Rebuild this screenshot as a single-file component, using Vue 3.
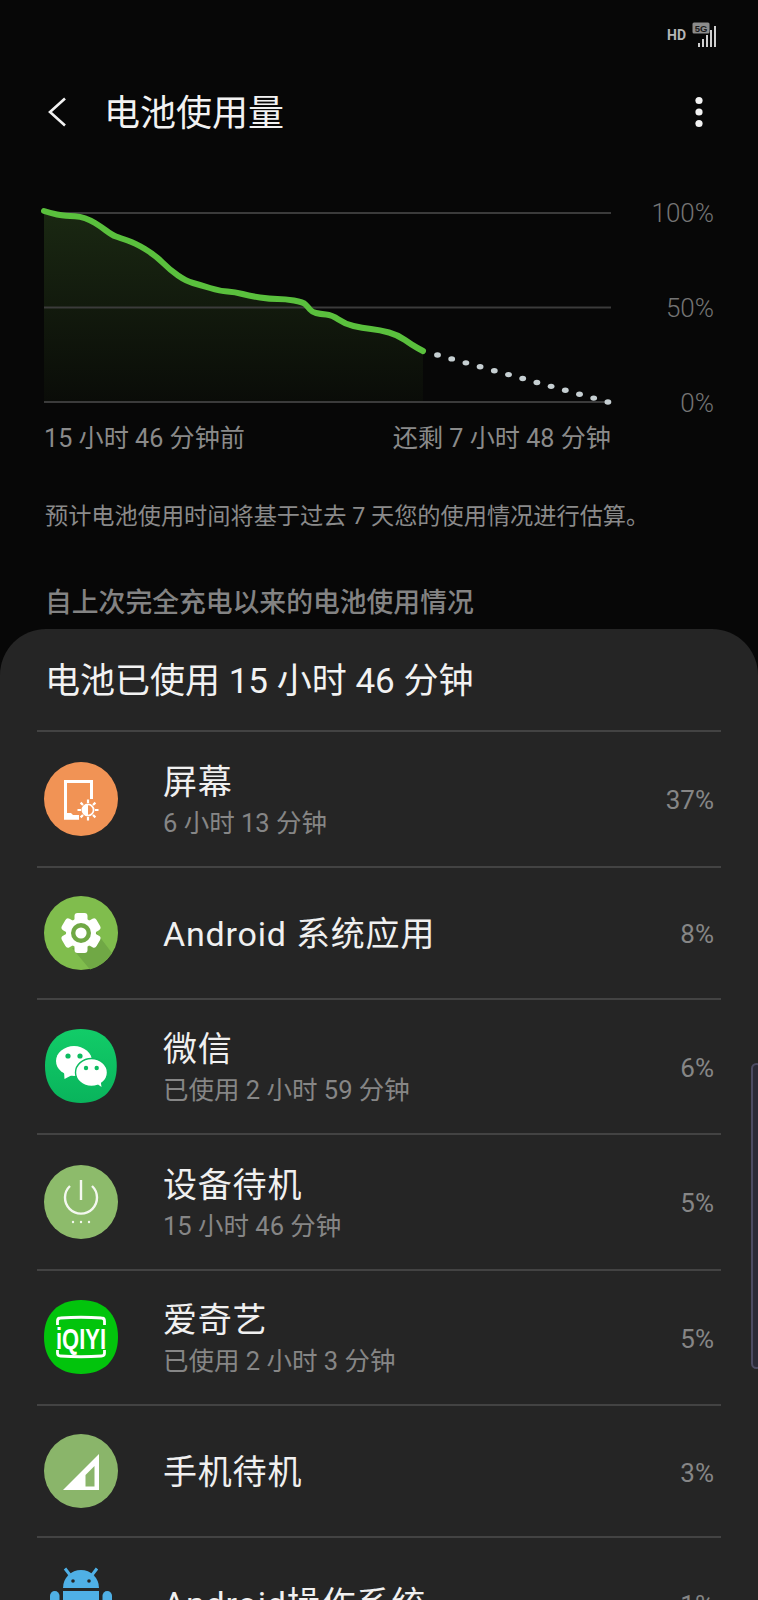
<template>
  <div class="page">
    <!-- status bar -->
    <div class="status">
      <span class="hd">HD</span>
      <svg class="signal" width="26" height="26" viewBox="0 0 26 26">
        <rect x="0.5" y="0.5" width="17" height="11" rx="1.5" fill="#8c8c8c" />
        <text x="9" y="9.6" text-anchor="middle" class="five-g">5G</text>
        <rect x="6" y="21" width="2" height="4" fill="#cfcfcf" />
        <rect x="10" y="17" width="2" height="8" fill="#cfcfcf" />
        <rect x="14" y="13" width="2" height="12" fill="#cfcfcf" />
        <rect x="18" y="8" width="2" height="17" fill="#cfcfcf" />
        <rect x="22" y="4" width="2" height="21" fill="#cfcfcf" />
      </svg>
    </div>

    <!-- app bar -->
    <header class="appbar">
      <svg class="back" width="20" height="30" viewBox="0 0 20 30">
        <path d="M18 1.5 L3 15 L18 28.5" fill="none" stroke="#f2f2f2" stroke-width="2.6" />
      </svg>
      <h1 class="title">电池使用量</h1>
      <svg class="more" width="8" height="32" viewBox="0 0 8 32">
        <circle cx="4" cy="4.5" r="3.6" fill="#f2f2f2" />
        <circle cx="4" cy="16" r="3.6" fill="#f2f2f2" />
        <circle cx="4" cy="27.5" r="3.6" fill="#f2f2f2" />
      </svg>
    </header>

    <!-- chart -->
    <section class="chart">
      <svg width="575" height="205" viewBox="40 205 575 205">
        <defs>
          <linearGradient id="area" x1="0" y1="0" x2="0" y2="1">
            <stop offset="0" stop-color="#1a2812" />
            <stop offset="1" stop-color="#0a0c08" />
          </linearGradient>
        </defs>
        <path :d="areaPath" fill="url(#area)" />
        <line v-for="y in gridLines" :key="y" x1="44" x2="611" :y1="y" :y2="y" stroke="#3b3b3b" stroke-width="2" />
        <path :d="linePath" fill="none" stroke="#5ac03d" stroke-width="6" stroke-linecap="round" stroke-linejoin="round" />
        <ellipse v-for="d in dots" :key="d.x" :cx="d.x" :cy="d.y" rx="3.4" ry="2.7" fill="#c6cfd2" />
      </svg>
      <div class="yaxis">
        <span>100%</span>
        <span>50%</span>
        <span>0%</span>
      </div>
    </section>
    <div class="xaxis">
      <span>15 小时 46 分钟前</span>
      <span>还剩 7 小时 48 分钟</span>
    </div>

    <p class="note">预计电池使用时间将基于过去 7 天您的使用情况进行估算。</p>
    <h2 class="since">自上次完全充电以来的电池使用情况</h2>

    <!-- usage sheet -->
    <section class="sheet">
      <div class="sheet-title">电池已使用 15 小时 46 分钟</div>
      <div v-for="row in rows" :key="row.name" class="row" :class="{ tall: row.sub }">
        <svg class="icon" width="74" height="74" viewBox="0 0 74 74">
          <template v-if="row.icon === 'screen'">
            <circle cx="37" cy="37" r="37" fill="#f19355" />
            <path d="M35 56 H21.5 V19.5 H47.5 V37" fill="none" stroke="#fff" stroke-width="3" />
            <path d="M20 51 H27 L29 53 H35 V57.5 H20 Z" fill="#fff" />
            <circle cx="44" cy="48" r="5.6" fill="none" stroke="#fff" stroke-width="1.8" />
            <path d="M44 42.4 A5.6 5.6 0 0 0 44 53.6 Z" fill="#fff" />
            <path d="M44 37.5 V41 M44 55 V58.5 M33.5 48 H37 M51 48 H54.5 M36.6 40.6 L39 43 M49 53 L51.4 55.4 M36.6 55.4 L39 53 M49 43 L51.4 40.6" stroke="#fff" stroke-width="2.2" />
          </template>

          <template v-else-if="row.icon === 'gear'">
            <circle cx="37" cy="37" r="37" fill="#80bd4d" />
            <path d="M50 50 L28 52 L46 73.5 A37 37 0 0 0 68 57 L52 36 Z" fill="#70a845" />
            <circle cx="37" cy="37" r="15" fill="#fff" />
            <rect v-for="a in gearAngles" :key="a" x="30.5" y="17" width="13" height="12" rx="3" fill="#fff" :transform="`rotate(${a} 37 37)`" />
            <circle cx="37" cy="37" r="10" fill="#70a845" />
            <circle cx="37" cy="37" r="5.6" fill="#fff" />
          </template>

          <template v-else-if="row.icon === 'wechat'">
            <defs>
              <linearGradient id="wx" x1="0" y1="0" x2="0" y2="1">
                <stop offset="0" stop-color="#12cc68" />
                <stop offset="1" stop-color="#09b45c" />
              </linearGradient>
            </defs>
            <path d="M37 0 C60 0 74 14 74 37 C74 60 60 74 37 74 C14 74 0 60 0 37 C0 14 14 0 37 0 Z" fill="url(#wx)" transform="translate(1 0) scale(.97 1)" />
            <ellipse cx="30" cy="32" rx="18" ry="15" fill="#fff" />
            <path d="M20 42 L20.5 50 L30 45 Z" fill="#fff" />
            <circle cx="24" cy="27" r="2.6" fill="#0cbc60" />
            <circle cx="36" cy="27" r="2.6" fill="#0cbc60" />
            <ellipse cx="47.5" cy="43.5" rx="16" ry="14" fill="#fff" stroke="#0cbc60" stroke-width="1.4" />
            <path d="M52 54 L57.5 58 L56.5 51 Z" fill="#fff" />
            <circle cx="42" cy="39" r="2.2" fill="#0cbc60" />
            <circle cx="52.7" cy="39" r="2.2" fill="#0cbc60" />
          </template>

          <template v-else-if="row.icon === 'power'">
            <circle cx="37" cy="37" r="37" fill="#8dbb6b" />
            <path d="M26 21 A16 16 0 1 0 48 21" fill="none" stroke="#f4f8f0" stroke-width="2.4" />
            <path d="M37 15 V35" stroke="#f4f8f0" stroke-width="2.4" />
            <circle cx="29" cy="57" r="1.2" fill="#f4f8f0" />
            <circle cx="37" cy="57" r="1.2" fill="#f4f8f0" />
            <circle cx="45" cy="57" r="1.2" fill="#f4f8f0" />
          </template>

          <template v-else-if="row.icon === 'iqiyi'">
            <path d="M37 0 C60 0 74 14 74 37 C74 60 60 74 37 74 C14 74 0 60 0 37 C0 14 14 0 37 0 Z" fill="#02c40c" />
            <path d="M13.5 25 V21 Q13.5 18 16.5 18 Q37 16.5 57.5 18 Q60.5 18 60.5 21 V25 M13.5 50 V53 Q13.5 56 16.5 56 Q37 57.5 57.5 56 Q60.5 56 60.5 53 V50" fill="none" stroke="#fff" stroke-width="2.8" />
            <text x="37" y="48.5" text-anchor="middle" textLength="50" lengthAdjust="spacingAndGlyphs" class="iq">iQIYI</text>
          </template>

          <template v-else-if="row.icon === 'signal'">
            <circle cx="37" cy="37" r="37" fill="#8ab56a" />
            <path d="M19 56 L55 20 V56 Z" fill="#fff" />
            <path d="M41.5 41 L50.5 32 V52.5 H41.5 Z" fill="#8ab56a" />
          </template>

          <template v-else>
            <g fill="#4fb0e6">
              <path d="M19 22 A18 18 0 0 1 55 22 Z" />
              <path d="M26 9 L21 2.5 M48 9 L53 2.5" stroke="#4fb0e6" stroke-width="3" />
              <rect x="19" y="25" width="36" height="44" />
              <rect x="6" y="25" width="9.5" height="32" rx="4.7" />
              <rect x="58.5" y="25" width="9.5" height="32" rx="4.7" />
            </g>
            <circle cx="29" cy="15" r="1.8" fill="#252525" />
            <circle cx="45" cy="15" r="1.8" fill="#252525" />
          </template>
        </svg>
        <div class="row-text">
          <div class="name">{{ row.name }}</div>
          <div v-if="row.sub" class="sub">{{ row.sub }}</div>
        </div>
        <div class="pct">{{ row.pct }}</div>
      </div>
    </section>

    <!-- edge panel handle -->
    <div class="handle"></div>
  </div>
</template>

<script setup>
const gridLines = [213, 307.5, 402]
const gearAngles = [0, 60, 120, 180, 240, 300]

const curve = [
  [44, 211], [52, 213.5], [62, 215.5], [70, 216], [80, 216.5], [90, 220], [100, 226], [112, 235],
  [120, 238], [135, 243], [155, 255], [170, 270], [186, 281], [200, 285], [220, 291], [235, 292],
  [250, 296], [270, 299], [285, 299], [303, 302], [308, 307], [312, 312], [320, 314], [332, 315],
  [345, 324], [362, 328], [380, 330], [398, 335], [412, 345], [423, 351]
]

// smooth the line through the midpoints
const smooth = (pts) => {
  let d = `M${pts[0][0]} ${pts[0][1]}`
  for (let i = 1; i < pts.length - 1; i++) {
    const mx = (pts[i][0] + pts[i + 1][0]) / 2
    const my = (pts[i][1] + pts[i + 1][1]) / 2
    d += ` Q${pts[i][0]} ${pts[i][1]} ${mx} ${my}`
  }
  const last = pts[pts.length - 1]
  return d + ` L${last[0]} ${last[1]}`
}

const linePath = smooth(curve)
const areaPath = linePath + ' L423 402 L44 402 Z'

const dots = Array.from({ length: 13 }, (_, i) => ({
  x: 437.5 + i * 14.2,
  y: 355 + i * 3.92
}))

const rows = [
  { icon: 'screen', name: '屏幕', sub: '6 小时 13 分钟', pct: '37%' },
  { icon: 'gear', name: 'Android 系统应用', pct: '8%' },
  { icon: 'wechat', name: '微信', sub: '已使用 2 小时 59 分钟', pct: '6%' },
  { icon: 'power', name: '设备待机', sub: '15 小时 46 分钟', pct: '5%' },
  { icon: 'iqiyi', name: '爱奇艺', sub: '已使用 2 小时 3 分钟', pct: '5%' },
  { icon: 'signal', name: '手机待机', pct: '3%' },
  { icon: 'android', name: 'Android操作系统', pct: '1%' }
]
</script>

<style>
html, body {
  background: #070707;
}
</style>

<style scoped>
.page {
  position: relative;
  width: 758px;
  height: 1600px;
  overflow: hidden;
  background: #070707;
  font-family: Roboto, "Noto Sans CJK SC", sans-serif;
}

.status {
  height: 60px;
  box-sizing: border-box;
  padding: 22px 40px 0 0;
  display: flex;
  justify-content: flex-end;
  align-items: flex-start;
}
.hd {
  margin: 5px 6px 0 0;
  font-size: 14px;
  line-height: 16px;
  font-weight: 700;
  color: #b5b5b5;
}
.five-g {
  font-family: "Liberation Sans", sans-serif;
  font-size: 9.5px;
  font-weight: 700;
  fill: #1b1b1b;
}

.appbar {
  height: 104px;
  display: flex;
  align-items: center;
  padding: 0 55px 0 47px;
}
.back {
  flex: none;
}
.title {
  margin: 4px 0 0 37px;
  flex: 1;
  font-size: 36px;
  line-height: 44px;
  font-weight: 400;
  color: #f2f2f2;
}
.more {
  flex: none;
}

.chart {
  margin-top: 41px;
  padding-left: 40px;
  display: flex;
  align-items: flex-start;
}
.chart svg {
  display: block;
  flex: none;
}
.yaxis {
  width: 99px;
  height: 220px;
  margin-top: -7px;
  display: flex;
  flex-direction: column;
  justify-content: space-between;
  text-align: right;
  font-size: 26px;
  line-height: 30px;
  font-weight: 300;
  color: #747474;
}

.xaxis {
  width: 567px;
  margin: 6px 0 0 44px;
  display: flex;
  justify-content: space-between;
  font-size: 25.15px;
  line-height: 30px;
  color: #8a8a8a;
}

.note {
  margin: 47px 0 0 45px;
  font-size: 23.2px;
  line-height: 30px;
  color: #8a8a8a;
  white-space: nowrap;
}
.since {
  margin: 55px 0 0 45px;
  font-size: 26.8px;
  line-height: 34px;
  font-weight: 500;
  color: #838383;
}

.sheet {
  margin-top: 9px;
  height: 982px;
  box-sizing: border-box;
  padding: 33px 37px 0;
  background: #252525;
  border-radius: 46px 46px 0 0;
}
.sheet-title {
  padding-left: 8px;
  margin-bottom: 28px;
  font-size: 35px;
  line-height: 40px;
  color: #f2f2f2;
}

.row {
  height: 132px;
  box-sizing: border-box;
  padding: 0 7px 0 7px;
  border-top: 2px solid #434343;
  display: flex;
  align-items: center;
}
.row.tall {
  height: 135.5px;
}
.icon {
  flex: none;
  display: block;
}
.iq {
  font-family: "Liberation Sans", sans-serif;
  font-size: 30px;
  font-weight: 700;
  fill: #fff;
}
.row-text {
  flex: 1;
  margin-left: 45px;
  padding-top: 3px;
}
.row.tall .row-text {
  padding-top: 8px;
}
.name {
  font-size: 34px;
  letter-spacing: 0.8px;
  line-height: 41px;
  color: #f0f0f0;
  white-space: nowrap;
}
.sub {
  font-size: 25.5px;
  line-height: 41px;
  color: #868686;
  white-space: nowrap;
}
.pct {
  padding-top: 3px;
  font-size: 26px;
  line-height: 30px;
  color: #868686;
}

.handle {
  position: absolute;
  right: -4px;
  top: 1063px;
  width: 11px;
  height: 306px;
  box-sizing: border-box;
  background: #2b2a36;
  border: 2px solid #4c4b62;
  border-radius: 9px;
}
</style>
